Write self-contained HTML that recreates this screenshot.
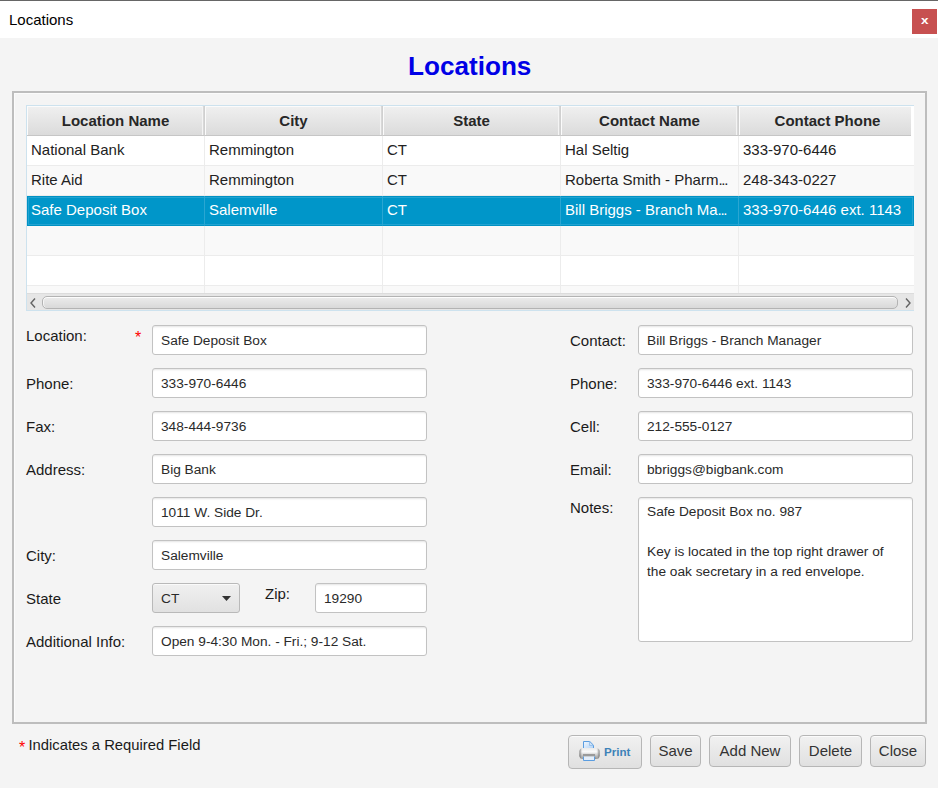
<!DOCTYPE html>
<html><head><meta charset="utf-8">
<style>
*{box-sizing:border-box;margin:0;padding:0}
html,body{width:938px;height:788px;overflow:hidden;background:#f4f4f4;font-family:"Liberation Sans",sans-serif;color:#333}
.a{position:absolute}
.t{position:absolute;white-space:nowrap;line-height:1}
#titlebar{left:0;top:0;width:938px;height:38px;background:#fff;border-top:1px solid #666}
#wtitle{left:9px;top:12px;font-size:15px;color:#000}
#xbtn{left:912px;top:9px;width:25px;height:25px;background:#c75050}
#heading{left:408px;top:53.5px;font-size:25px;transform:scaleX(1.045);transform-origin:0 0;font-weight:bold;color:#0000e6}
#panel{left:12px;top:91px;width:915px;height:633px;border:2px solid #bdbdbd}
#panelin{left:14px;top:93px;width:911px;height:629px;border-top:1px solid #fbfbfb;border-left:1px solid #fbfbfb}
/* table */
#table{left:26px;top:105px;width:888px;height:206px;border:1px solid #cde2ee;border-right:0;background:#fff;overflow:hidden}
#tbr{left:913px;top:105px;width:1px;height:31px;background:#cde2ee}
.hdr{position:absolute;top:0;height:30px;background:linear-gradient(#f0f0f0,#dbdbdb);border-right:1px solid #d0d0d0;border-bottom:1px solid #c6c6c6;box-shadow:inset -1px 0 0 #d8d8d8,inset -2px 0 0 #f4f4f4,inset 1px 1px 0 #fbfbfb;font-weight:bold;font-size:15px;color:#272727;text-align:center;line-height:29px}
.row{position:absolute;left:0;width:887px;height:30px;background:#fff}
.row.alt{background:#f9f9f9}
.row.sel{background:#0096c9;color:#fff;box-shadow:inset 0 0 0 1px #0092c4,inset 0 0 0 2px #23a3d1}
.cell{position:absolute;top:0;height:30px;border-right:1px solid #ececec;border-bottom:1px solid #ececec;font-size:15px;line-height:28px;padding-left:4px;color:#222;white-space:nowrap;overflow:hidden}
.sel .cell{border-right-color:#2aa6d2;border-bottom-color:transparent;color:#fff}
#hscroll{position:absolute;left:0;top:187px;width:887px;height:17px;background:#e6e6e6;border-top:1px solid #dcdcdc}
#thumb{position:absolute;left:15px;top:2px;width:856px;height:13px;border:1px solid #b3b3b3;border-radius:5px;background:linear-gradient(#ececec,#d9d9d9);box-shadow:inset 0 1px 0 #fdfdfd,inset 1px 0 0 #f6f6f6}
/* form */
.lbl{position:absolute;white-space:nowrap;font-size:15px;color:#1a1a1a;line-height:1}
.fld{position:absolute;height:30px;background:#fff;border:1px solid #c2c2c2;border-radius:3px;box-shadow:inset 0 2px 2px -1px #e4e4e4;font-size:13.7px;color:#2a2a2a;padding-left:8px;line-height:29px;white-space:nowrap;overflow:hidden}
.btn{position:absolute;height:32px;border:1px solid #b6b6b6;border-radius:4px;background:linear-gradient(#f1f1f1,#e0e0e0);box-shadow:inset 0 1px 0 #fbfbfb;font-size:15px;color:#333;text-align:center;line-height:30px;white-space:nowrap}
</style></head><body>
<div id="titlebar" class="a"></div>
<div id="wtitle" class="t">Locations</div>
<div id="xbtn" class="a"><div class="t" style="left:8.6px;top:5.3px;font-size:12.5px;font-weight:bold;color:#fff;transform:scale(1.08,0.92);transform-origin:0 100%">x</div></div>
<div id="heading" class="t">Locations</div>
<div id="panel" class="a"></div>
<div id="panelin" class="a"></div>

<div id="tbr" class="a"></div>
<div id="table" class="a">
  <div class="a" style="left:0;top:0;width:884px;height:30px;overflow:hidden"><div class="hdr" style="left:0;width:178px">Location Name</div>
  <div class="hdr" style="left:178px;width:178px">City</div>
  <div class="hdr" style="left:356px;width:178px">State</div>
  <div class="hdr" style="left:534px;width:178px">Contact Name</div>
  <div class="hdr" style="left:712px;width:178px">Contact Phone</div></div>
  <div class="row" style="top:30px">
    <div class="cell" style="left:0;width:178px">National Bank</div>
    <div class="cell" style="left:178px;width:178px">Remmington</div>
    <div class="cell" style="left:356px;width:178px">CT</div>
    <div class="cell" style="left:534px;width:178px">Hal Seltig</div>
    <div class="cell" style="left:712px;width:178px">333-970-6446</div>
  </div>
  <div class="row alt" style="top:60px">
    <div class="cell" style="left:0;width:178px">Rite Aid</div>
    <div class="cell" style="left:178px;width:178px">Remmington</div>
    <div class="cell" style="left:356px;width:178px">CT</div>
    <div class="cell" style="left:534px;width:178px">Roberta Smith - Pharm<span style="letter-spacing:-1.3px">...</span></div>
    <div class="cell" style="left:712px;width:178px">248-343-0227</div>
  </div>
  <div class="row sel" style="top:90px">
    <div class="cell" style="left:0;width:178px">Safe Deposit Box</div>
    <div class="cell" style="left:178px;width:178px">Salemville</div>
    <div class="cell" style="left:356px;width:178px">CT</div>
    <div class="cell" style="left:534px;width:178px">Bill Briggs - Branch Ma<span style="letter-spacing:-1.3px">...</span></div>
    <div class="cell" style="left:712px;width:178px">333-970-6446 ext. 1143</div>
  </div>
  <div class="row alt" style="top:120px">
    <div class="cell" style="left:0;width:178px"></div><div class="cell" style="left:178px;width:178px"></div><div class="cell" style="left:356px;width:178px"></div><div class="cell" style="left:534px;width:178px"></div><div class="cell" style="left:712px;width:178px"></div>
  </div>
  <div class="row" style="top:150px">
    <div class="cell" style="left:0;width:178px"></div><div class="cell" style="left:178px;width:178px"></div><div class="cell" style="left:356px;width:178px"></div><div class="cell" style="left:534px;width:178px"></div><div class="cell" style="left:712px;width:178px"></div>
  </div>
  <div class="row alt" style="top:180px">
    <div class="cell" style="left:0;width:178px"></div><div class="cell" style="left:178px;width:178px"></div><div class="cell" style="left:356px;width:178px"></div><div class="cell" style="left:534px;width:178px"></div><div class="cell" style="left:712px;width:178px"></div>
  </div>
  <div id="hscroll"><div id="thumb"></div>
    <svg class="a" style="left:0;top:0" width="887" height="17"><path d="M8 4.5 L4 9 L8 13.5" fill="none" stroke="#636363" stroke-width="1.4"/><path d="M879 4.5 L883 9 L879 13.5" fill="none" stroke="#636363" stroke-width="1.4"/></svg></div>
</div>

<!-- left form -->
<div class="lbl" style="left:26px;top:328px">Location:</div>
<div class="lbl" style="left:26px;top:376px">Phone:</div>
<div class="lbl" style="left:26px;top:419px">Fax:</div>
<div class="lbl" style="left:26px;top:462px">Address:</div>
<div class="lbl" style="left:26px;top:548px">City:</div>
<div class="lbl" style="left:26px;top:591px">State</div>
<div class="lbl" style="left:265px;top:586px">Zip:</div>
<div class="lbl" style="left:26px;top:634px">Additional Info:</div>
<div class="fld" style="left:152px;top:325px;width:275px">Safe Deposit Box</div>
<div class="fld" style="left:152px;top:368px;width:275px">333-970-6446</div>
<div class="fld" style="left:152px;top:411px;width:275px">348-444-9736</div>
<div class="fld" style="left:152px;top:454px;width:275px">Big Bank</div>
<div class="fld" style="left:152px;top:497px;width:275px">1011 W. Side Dr.</div>
<div class="fld" style="left:152px;top:540px;width:275px">Salemville</div>
<div class="fld" style="left:315px;top:583px;width:112px">19290</div>
<div class="fld" style="left:152px;top:626px;width:275px">Open 9-4:30 Mon. - Fri.; 9-12 Sat.</div>

<!-- right form -->
<div class="lbl" style="left:570px;top:333px">Contact:</div>
<div class="lbl" style="left:570px;top:376px">Phone:</div>
<div class="lbl" style="left:570px;top:419px">Cell:</div>
<div class="lbl" style="left:570px;top:462px">Email:</div>
<div class="lbl" style="left:570px;top:500px">Notes:</div>
<div class="fld" style="left:638px;top:325px;width:275px">Bill Briggs - Branch Manager</div>
<div class="fld" style="left:638px;top:368px;width:275px">333-970-6446 ext. 1143</div>
<div class="fld" style="left:638px;top:411px;width:275px">212-555-0127</div>
<div class="fld" style="left:638px;top:454px;width:275px">bbriggs@bigbank.com</div>

<!-- bottom -->
<div class="fld" style="left:638px;top:497px;width:275px;height:145px;line-height:20px;padding-top:4px;white-space:normal">Safe Deposit Box no. 987<br><br>Key is located in the top right drawer of<br>the oak secretary in a red envelope.</div>
<div id="combo" class="a" style="left:152px;top:583px;width:88px;height:30px;border:1px solid #b9b9b9;border-radius:3px;background:linear-gradient(#f0f0f0,#e1e1e1);box-shadow:inset 0 1px 0 #fafafa">
  <div class="t" style="left:8px;top:8px;font-size:13.7px;color:#2a2a2a">CT</div>
  <svg class="a" style="left:68px;top:11px" width="12" height="8"><path d="M1 1 L10 1 L5.5 6 Z" fill="#333"/></svg>
</div>
<div class="lbl" style="left:19px;top:739.5px;font-size:16px;color:#f00">*</div>
<div class="lbl" style="left:28.5px;top:738px;font-size:14.8px">Indicates a Required Field</div>
<div class="lbl" style="left:135px;top:329.5px;font-size:16px;color:#f00">*</div>
<div class="btn" style="left:568px;top:735px;width:74px;height:34px">
  <svg class="a" style="left:10px;top:5px" width="21" height="21" viewBox="0 0 21 21">
    <defs>
      <linearGradient id="pb" x1="0" y1="0" x2="0" y2="1"><stop offset="0" stop-color="#e9e9e9"/><stop offset="0.35" stop-color="#fbfbfb"/><stop offset="0.7" stop-color="#bdbdbd"/><stop offset="1" stop-color="#8c8c8c"/></linearGradient>
      <linearGradient id="pe" x1="0" y1="0" x2="1" y2="0"><stop offset="0" stop-color="#4a4a4a" stop-opacity="0.75"/><stop offset="0.18" stop-color="#ffffff" stop-opacity="0"/><stop offset="0.82" stop-color="#ffffff" stop-opacity="0"/><stop offset="1" stop-color="#4a4a4a" stop-opacity="0.75"/></linearGradient>
      <linearGradient id="pp" x1="0" y1="0" x2="1" y2="1"><stop offset="0" stop-color="#f2f8ff"/><stop offset="1" stop-color="#a9cdf3"/></linearGradient>
    </defs>
    <path d="M4.5 0.5 H10.8 L14.5 4.2 V9 H4.5 Z" fill="url(#pp)" stroke="#5b9de0" stroke-width="1"/>
    <path d="M10.5 0.5 V4.5 H14.5" fill="none" stroke="#8dbbea" stroke-width="0.8"/>
    <rect x="0.5" y="7" width="20" height="11" rx="3.5" fill="url(#pb)"/>
    <rect x="0.5" y="7" width="20" height="11" rx="3.5" fill="url(#pe)"/>
    <path d="M4.5 15.5 V19.5 H15.5 V15.5" fill="#e3eefb" stroke="#5b9de0" stroke-width="1"/>
    <rect x="4" y="13" width="12" height="2" fill="#9a9a9a"/>
  </svg>
  <div class="t" style="left:35px;top:10px;font-size:11.6px;font-weight:bold;color:#3d82b8">Print</div>
</div>

<div class="btn" style="left:650px;top:735px;width:51px">Save</div>
<div class="btn" style="left:709px;top:735px;width:82px">Add New</div>
<div class="btn" style="left:799px;top:735px;width:63px">Delete</div>
<div class="btn" style="left:870px;top:735px;width:56px">Close</div>
</body></html>
